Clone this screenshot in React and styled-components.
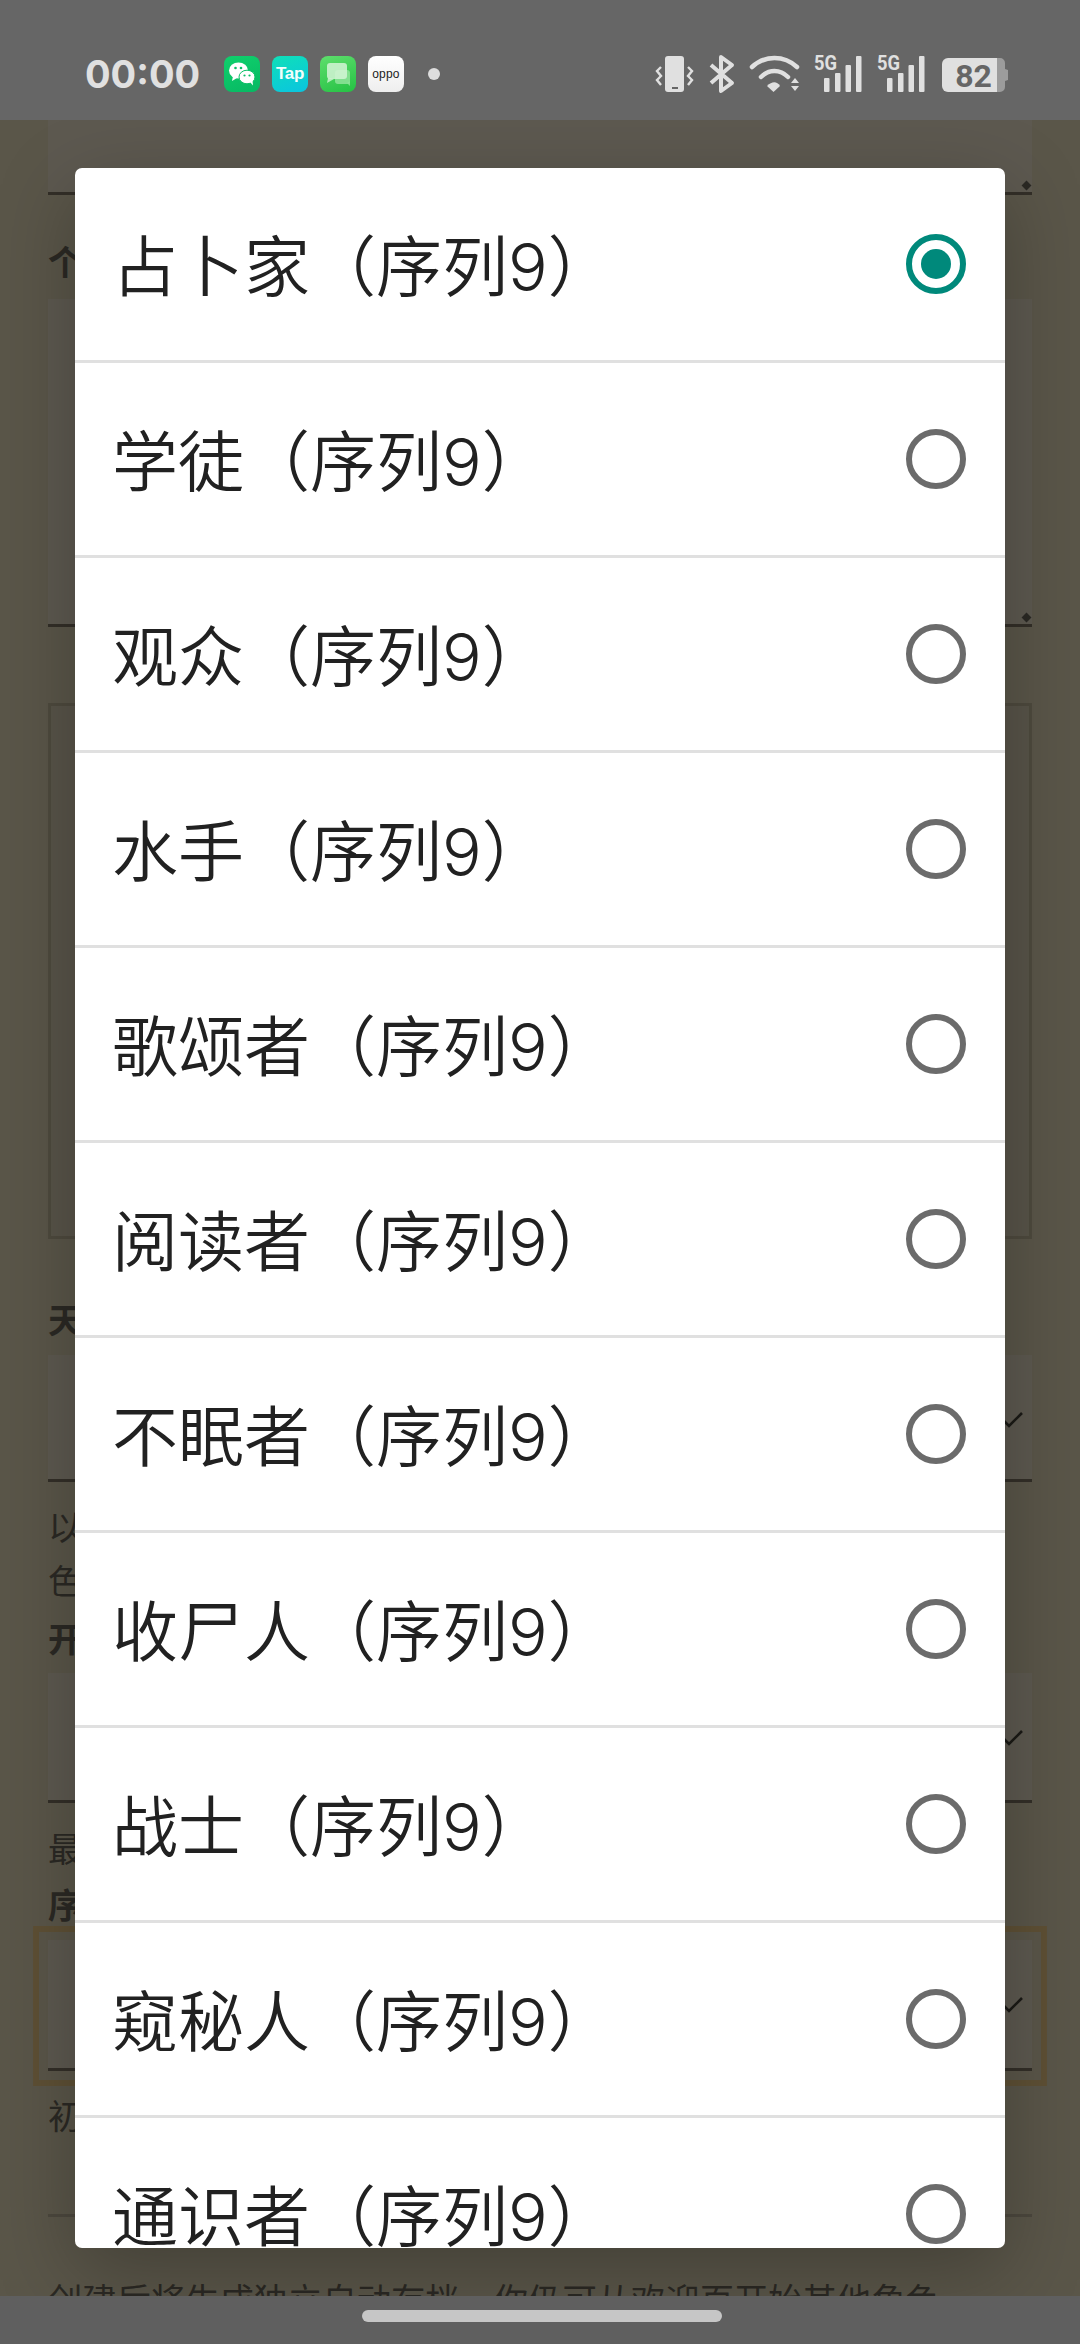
import React from "react";
import styled, { createGlobalStyle } from "styled-components";

const Global = createGlobalStyle`
  html, body { margin: 0; padding: 0; background: #5a5649; }
  #root { width: 1080px; height: 2344px; overflow: hidden; }
  * { box-sizing: border-box; }
`;

const CJK = `"Noto Sans CJK SC", "Noto Sans", sans-serif`;

const Screen = styled.div`
  position: relative;
  width: 1080px;
  height: 2344px;
  overflow: hidden;
  background: #5a5649;
  font-family: ${CJK};
`;

/* ---------- page under the scrim ---------- */
const Page = styled.div`
  display: flex;
  flex-direction: column;
  height: 2344px;
  padding: 120px 48px 0;
  color: #2b2924;
  font-size: 34.3px;
`;
const Field = styled.div`
  position: relative;
  flex: none;
  height: ${(p) => p.$h}px;
  background: #5d5950;
  border-bottom: 3px solid #332f28;
  margin-top: ${(p) => p.$mt || 0}px;
`;
const Heading = styled.div`
  flex: none;
  height: ${(p) => p.$h}px;
  margin-top: ${(p) => p.$mt || 0}px;
  display: flex;
  align-items: center;
  font-weight: 700;
  line-height: 1;
`;
const Helper = styled.div`
  flex: none;
  line-height: 54px;
  margin-top: ${(p) => p.$mt || 0}px;
  white-space: nowrap;
`;
const Outlined = styled.div`
  flex: none;
  height: 536px;
  margin-top: ${(p) => p.$mt}px;
  background: #585449;
  border: 3px solid #4e4a3e;
`;
const Check = styled.svg`
  position: absolute;
  right: 8px;
  top: 55px;
  width: 26px;
  height: 22px;
`;
const Dot = styled.span`
  position: absolute;
  right: 2px;
  bottom: 3px;
  width: 7px;
  height: 7px;
  background: #2b2924;
  transform: rotate(45deg);
`;
const Highlight = styled.div`
  position: absolute;
  left: 33px;
  top: 1926px;
  width: 1014px;
  height: 160px;
  border: 6px solid #5e5035;
`;
const Rule = styled.div`
  flex: none;
  height: 3px;
  background: #4c483e;
  margin-top: ${(p) => p.$mt}px;
`;

/* ---------- dialog ---------- */
const Dialog = styled.div`
  position: absolute;
  left: 75px;
  top: 168px;
  width: 930px;
  height: 2080px;
  background: #fff;
  border-radius: 7px;
  overflow: hidden;
  box-shadow: 0 24px 80px rgba(0, 0, 0, 0.26);
`;
const Row = styled.div`
  height: 195px;
  flex: none;
  display: flex;
  align-items: center;
  justify-content: space-between;
  padding: 0 39px 0 37px;
  border-bottom: 3px solid #e0e0e0;
`;
const Label = styled.span`
  font-family: Inter, ${CJK};
  font-size: 66px;
  font-weight: 350;
  line-height: 1;
  padding-top: 6px;
  color: #212121;
  white-space: nowrap;
`;
const Radio = styled.span`
  flex: none;
  width: 60px;
  height: 60px;
  border-radius: 50%;
  border: 6.5px solid ${(p) => (p.$on ? "#00897b" : "#6b6b6b")};
  display: flex;
  align-items: center;
  justify-content: center;
  &::after {
    content: "";
    display: ${(p) => (p.$on ? "block" : "none")};
    width: 30px;
    height: 30px;
    border-radius: 50%;
    background: #00897b;
  }
`;

/* ---------- system bars ---------- */
const StatusBar = styled.div`
  position: absolute;
  left: 0;
  top: 0;
  width: 1080px;
  height: 120px;
  background: #666;
  display: flex;
  align-items: flex-start;
  padding: 56px 0 0 85px;
  color: #e0e0e0;
`;
const Time = styled.span`
  font-family: Inter, "Open Sans", sans-serif;
  font-size: 38px;
  font-weight: 700;
  line-height: 36px;
  width: 139px;
`;
const AppIcons = styled.div`
  display: flex;
  gap: 12px;
  align-items: center;
  height: 36px;
`;
const AppIcon = styled.div`
  width: 36px;
  height: 36px;
  border-radius: 8px;
  background: ${(p) => p.$bg};
  display: flex;
  align-items: center;
  justify-content: center;
  overflow: hidden;
`;
const TapText = styled.span`
  font-family: "Liberation Sans", sans-serif;
  font-size: 17px;
  font-weight: 700;
  color: #f2fffc;
  letter-spacing: -0.4px;
`;
const OppoText = styled.span`
  font-family: "Liberation Sans", sans-serif;
  font-size: 12px;
  color: #222;
  letter-spacing: 0.2px;
`;
const NotifDot = styled.span`
  width: 12px;
  height: 12px;
  border-radius: 50%;
  background: #ddd;
  margin: 12px 0 0 24px;
`;
const Tray = styled.svg`
  position: absolute;
  left: 650px;
  top: 50px;
  width: 370px;
  height: 50px;
`;
const TrayText = styled.text`
  font-family: Roboto, sans-serif;
  font-weight: 700;
  fill: ${(p) => p.$fill};
  font-size: ${(p) => p.$size}px;
`;
const NavBar = styled.div`
  position: absolute;
  left: 0;
  top: 2296px;
  width: 1080px;
  height: 48px;
  background: #5f5f5f;
  display: flex;
  justify-content: center;
  padding: 14px 0 0 4px;
`;
const Handle = styled.div`
  width: 360px;
  height: 12px;
  border-radius: 6px;
  background: #c6c6c6;
`;

const items = [
  "占卜家（序列9）", "学徒（序列9）", "观众（序列9）", "水手（序列9）",
  "歌颂者（序列9）", "阅读者（序列9）", "不眠者（序列9）", "收尸人（序列9）",
  "战士（序列9）", "窥秘人（序列9）", "通识者（序列9）",
];

const Tick = () => (
  <Check viewBox="0 0 26 22" fill="none" stroke="#1b1a16" strokeWidth="2.6">
    <path d="M3 8l8 8L24 3" />
  </Check>
);

function Signal({ x }) {
  return (
    <g transform={`translate(${x},0)`} fill="#e0e0e0">
      <TrayText x="0" y="20" textLength="23" lengthAdjust="spacingAndGlyphs" $fill="#e0e0e0" $size="20">5G</TrayText>
      <rect x="10" y="28" width="5.5" height="14" rx="1" />
      <rect x="21" y="23" width="5.5" height="19" rx="1" />
      <rect x="31.5" y="15" width="5.5" height="27" rx="1" />
      <rect x="42" y="6" width="5.5" height="36" rx="1" />
    </g>
  );
}

export default function App() {
  return (
    <Screen>
      <Global />
      <Page>
        <Field $h={75}><Dot /></Field>
        <Heading $h={30} $mt={50}>个人设定</Heading>
        <Field $h={328} $mt={24}><Dot /></Field>
        <Outlined $mt={76} />
        <Heading $h={30} $mt={64}>天赋</Heading>
        <Field $h={127} $mt={22}><Tick /></Field>
        <Helper $mt={16}>以下选项决定初始的属性与能力，不同途径会影响后续发展的角</Helper>
        <Helper>色成长。</Helper>
        <Heading $h={30} $mt={16}>开局</Heading>
        <Field $h={130} $mt={21}><Tick /></Field>
        <Helper $mt={17}>最多可以选择一项</Helper>
        <Heading $h={30} $mt={14}>序列</Heading>
        <Field $h={131} $mt={22}><Tick /></Field>
        <Helper $mt={16}>初始序列</Helper>
        <Rule $mt={73} />
        <Helper $mt={54}>创建后将生成独立自动存档，你仍可从欢迎页开始其他角色</Helper>
      </Page>
      <Highlight />
      <Dialog>
        {items.map((t, i) => (
          <Row key={t}>
            <Label>{t}</Label>
            <Radio $on={i === 0} />
          </Row>
        ))}
      </Dialog>
      <StatusBar>
        <Time>00:00</Time>
        <AppIcons>
          <AppIcon $bg="linear-gradient(160deg,#0fd06c,#07b863)">
            <svg width="28" height="26" viewBox="0 0 28 26">
              <ellipse cx="10.5" cy="9.5" rx="9.5" ry="8" fill="#fff" />
              <path d="M5 15l-1 5 5-3z" fill="#fff" />
              <ellipse cx="19" cy="16" rx="8" ry="6.8" fill="#fff" stroke="#0cc068" strokeWidth="1" />
              <path d="M22 21l3 3.5-.5-5z" fill="#fff" />
              <circle cx="7.5" cy="7" r="1.3" fill="#0cc068" />
              <circle cx="13" cy="7" r="1.3" fill="#0cc068" />
              <circle cx="16.5" cy="14.5" r="1.1" fill="#0cc068" />
              <circle cx="21.5" cy="14.5" r="1.1" fill="#0cc068" />
            </svg>
          </AppIcon>
          <AppIcon $bg="linear-gradient(160deg,#0fe0b8,#0ac4e0)">
            <TapText>Tap</TapText>
          </AppIcon>
          <AppIcon $bg="linear-gradient(160deg,#5ede6c,#25c144)">
            <svg width="30" height="30" viewBox="0 0 30 30">
              <rect x="12" y="11" width="15" height="14" rx="3" fill="#8fe39a" fillOpacity=".85" />
              <path d="M24 24l3 3v-5z" fill="#8fe39a" fillOpacity=".85" />
              <rect x="4" y="4" width="20" height="16" rx="3" fill="#d4f5d6" fillOpacity=".85" />
              <path d="M5 19l-1 5 7-4z" fill="#d4f5d6" fillOpacity=".8" />
            </svg>
          </AppIcon>
          <AppIcon $bg="linear-gradient(180deg,#fff,#eeeeee)">
            <OppoText>oppo</OppoText>
          </AppIcon>
        </AppIcons>
        <NotifDot />
        <Tray viewBox="0 0 370 50">
          <g fill="#e0e0e0">
            <rect x="15" y="6" width="19" height="36" rx="3" />
            <rect x="22" y="37" width="6" height="2" fill="#666" />
            <path d="M11 17l-4 4 4 5-4 4 4 5M38 17l4 4-4 5 4 4-4 5" fill="none" stroke="#e0e0e0" strokeWidth="2.4" />
            <path d="M61 15l21 18-11 8V7l11 8-21 18" fill="none" stroke="#e0e0e0" strokeWidth="4" strokeLinejoin="round" />
            <path d="M102 17c13-12 32-12 45 0" fill="none" stroke="#e0e0e0" strokeWidth="4.5" strokeLinecap="round" />
            <path d="M111 27c8-8 19-8 27 0" fill="none" stroke="#e0e0e0" strokeWidth="4.5" strokeLinecap="round" />
            <path d="M117 36c5-5 10-5 13 0l-6.500 6z" />
            <path d="M141 33l4-5 4 5zM141 36h8l-4 5z" />
          </g>
          <Signal x={164} />
          <Signal x={227} />
          <path d="M298 8h49v34h-49a6 6 0 0 1-6-6V14a6 6 0 0 1 6-6z" fill="#e0e0e0" />
          <path d="M347 8h3a5 5 0 0 1 5 5v6l3 1v10l-3 1v6a5 5 0 0 1-5 5h-3z" fill="#9c9c9c" />
          <TrayText x="323.500" y="37" textAnchor="middle" $fill="#666" $size="32">82</TrayText>
        </Tray>
      </StatusBar>
      <NavBar><Handle /></NavBar>
    </Screen>
  );
}
